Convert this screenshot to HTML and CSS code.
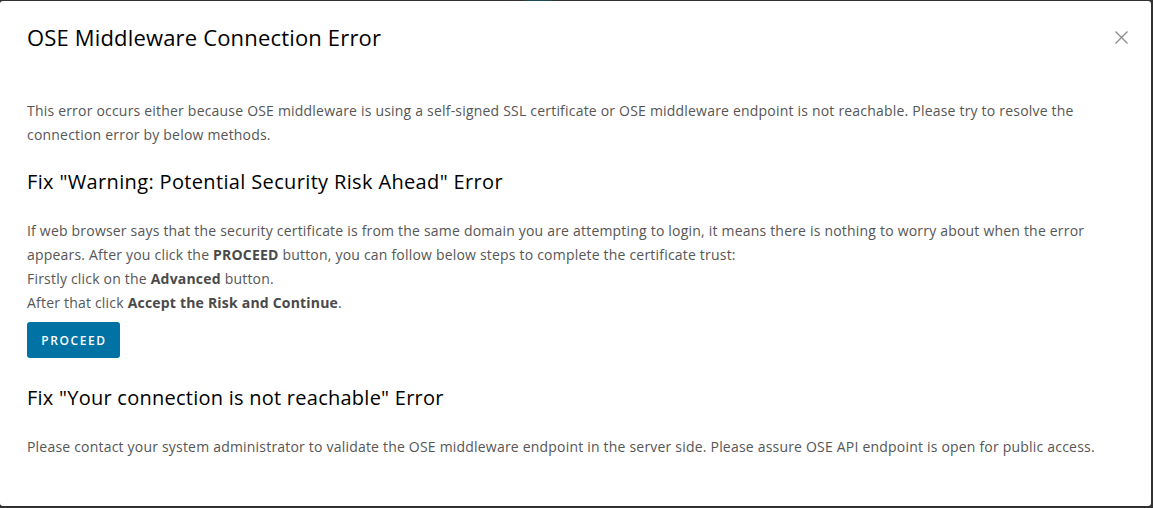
FILE: index.html
```html
<!DOCTYPE html>
<html lang="en">
<head>
<meta charset="utf-8">
<title>OSE Middleware Connection Error</title>
<link rel="stylesheet" href="styles.css">
</head>
<body>
<div class="backdrop">
  <div class="peek"></div>
  <div class="modal" role="dialog">
    <div class="modal-header">
      <h3 class="modal-title">OSE Middleware Connection Error</h3>
      <button class="close" aria-label="Close">
        <svg width="13" height="13" viewBox="0 0 13 13"><path d="M0.5 0.5 L12.5 12.5 M12.5 0.5 L0.5 12.5" stroke="#8c8c8c" stroke-width="1.3" fill="none"/></svg>
      </button>
    </div>
    <div class="modal-body">
      <p class="intro">This error occurs either because OSE middleware is using a self-signed SSL certificate or OSE middleware endpoint is not reachable. Please try to resolve the connection error by below methods.</p>
      <h4 class="fix-title first">Fix "Warning: Potential Security Risk Ahead" Error</h4>
      <p class="steps">If web browser says that the security certificate is from the same domain you are attempting to login, it means there is nothing to worry about when the error appears. After you click the <b>PROCEED</b> button, you can follow below steps to complete the certificate trust:<br>Firstly click on the <b>Advanced</b> button.<br>After that click <b>Accept the Risk and Continue</b>.</p>
      <button class="btn-primary">PROCEED</button>
      <h4 class="fix-title second">Fix "Your connection is not reachable" Error</h4>
      <p class="contact">Please contact your system administrator to validate the OSE middleware endpoint in the server side. Please assure OSE API endpoint is open for public access.</p>
    </div>
  </div>
</div>
</body>
</html>
```
FILE: styles.css
```css
html, body {
  margin: 0;
  padding: 0;
  background: #323232;
  height: 100%;
  overflow: hidden;
}
.backdrop {
  position: relative;
  height: 100%;
  padding-top: 1px;
  box-sizing: border-box;
}
.peek {
  position: absolute;
  top: 0;
  left: 525px;
  width: 26px;
  height: 1px;
  background: #1b4a55;
}
.modal {
  width: 1151px;
  height: 505px;
  background: #fff;
  border-radius: 3px;
  box-sizing: border-box;
  padding: 22px 26px 0 27px;
  font-family: "Open Sans", "Lato", sans-serif;
  color: #565656;
}
.modal-header {
  display: flex;
  justify-content: space-between;
  align-items: center;
}
.modal-title {
  margin: 0;
  font-size: 22px;
  line-height: 28px;
  font-weight: 400;
  letter-spacing: 0.17px;
  color: #000;
}
.close {
  border: 0;
  background: none;
  padding: 0;
  margin-right: -3px;
  width: 13px;
  height: 13px;
  display: flex;
  cursor: pointer;
}
.modal-body {
  display: flex;
  flex-direction: column;
  align-items: flex-start;
}
.modal-body p {
  margin: 0;
  font-size: 14px;
  line-height: 24px;
  letter-spacing: 0.2px;
  color: #565656;
}
.modal-body b {
  font-weight: 700;
  color: #4a4a4a;
}
.intro { margin-top: 48px !important; }
.fix-title {
  margin: 0;
  font-size: 20px;
  line-height: 28px;
  font-weight: 400;
  letter-spacing: 0.35px;
  color: #000;
}
.fix-title.first { margin-top: 21px; }
.fix-title.second { margin-top: 26px; letter-spacing: 0.25px; }
.steps { margin-top: 23px !important; }
.btn-primary {
  margin-top: 7px;
  height: 36px;
  padding: 0;
  width: 93px;
  background: #0072a3;
  color: #fff;
  border: 0;
  border-radius: 3px;
  font-family: "Open Sans", "Lato", sans-serif;
  font-size: 12px;
  font-weight: 600;
  letter-spacing: 1.6px;
  text-indent: 1px;
}
.contact { margin-top: 23px !important; }
```
